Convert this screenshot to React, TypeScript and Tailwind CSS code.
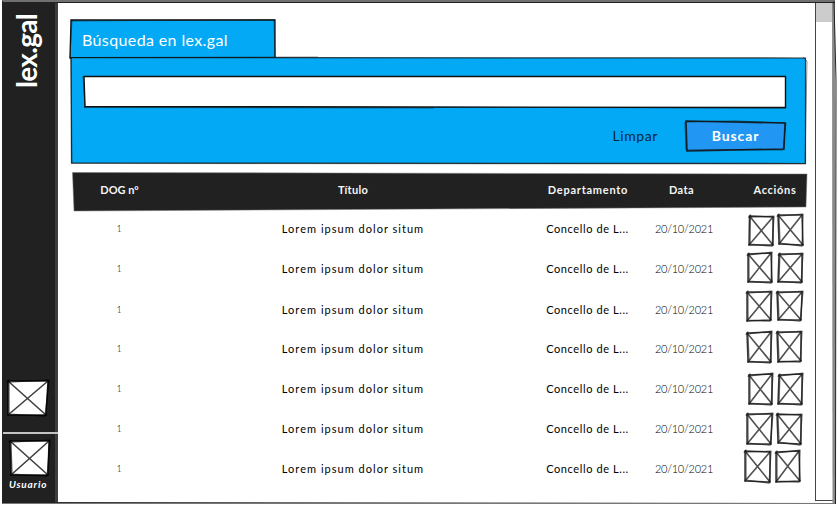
type Pt = [number, number];
type Quad = [Pt, Pt, Pt, Pt];

const toPath = (q: Quad) => `M${q.map((p) => p.join(' ')).join('L')}Z`;

/** Hand-drawn crossed placeholder box: two uneven outlines and both diagonals. */
function Sketch({ q, fill = 'none', ink = '#161616', className }: { q: Quad; fill?: string; ink?: string; className: string }) {
  const [a, b, c, d] = q;
  return (
    <svg className={`overflow-visible ${className}`} fill="none" stroke={ink} strokeLinejoin="round" strokeLinecap="round">
      <path d={toPath(q)} fill={fill} strokeWidth="1.5" strokeOpacity="0.85" />
      <path
        d={`M${a[0] - 0.9} ${a[1] + 1.2}L${b[0] + 1} ${b[1] - 0.8}L${c[0] - 0.9} ${c[1] + 1.1}L${d[0] + 1} ${d[1] - 0.8}L${a[0] + 0.9} ${a[1] - 1}`}
        strokeWidth="1.3"
        strokeOpacity="0.65"
      />
      <path d={`M${a.join(' ')}L${c.join(' ')}M${b.join(' ')}L${d.join(' ')}`} strokeWidth="1.6" strokeOpacity="0.75" />
    </svg>
  );
}

const rows: { left: Quad; right: Quad; pad: string }[] = [
  { left: [[4.5, 7], [28, 8], [28, 36], [4, 36]], right: [[3, 6], [27, 6], [28, 36], [4, 35]], pad: 'h-10' },
  { left: [[3, 5], [26, 4], [27, 33], [3, 33]], right: [[4, 5], [27, 5], [27, 33], [3, 33]], pad: 'h-10' },
  { left: [[2, 3], [26, 3], [26, 31], [2, 32]], right: [[2, 3], [27, 3], [26, 31], [3, 31]], pad: 'h-10 [&>span:not(:last-child)]:pt-px' },
  { left: [[2, 4], [26, 3], [26, 33], [3, 33]], right: [[2, 3], [26, 3], [26, 32], [3, 33]], pad: 'h-10' },
  { left: [[4, 6], [27, 5], [27, 35], [4, 35]], right: [[4, 6], [27, 5], [27, 35], [3, 35]], pad: 'h-10' },
  { left: [[2, 5], [27, 5], [26, 35], [2, 35]], right: [[2, 5], [26, 6], [26, 35], [3, 34]], pad: 'h-10' },
  { left: [[0, 2], [25, 3], [25, 33], [0, 32]], right: [[1, 3], [24, 2], [25, 32], [1, 33]], pad: 'h-10' },
];

function Sidebar() {
  return (
    <aside className="flex h-[504px] w-14 shrink-0 flex-col border-r-[3px] border-[#3d3d3d] bg-[#212121] text-white">
      <div className="flex h-[364px] w-full pt-[13px]">
        <span className="ml-[7px] h-[75px] rotate-180 whitespace-nowrap text-[28px] font-bold leading-[34px] tracking-[-0.7px] [writing-mode:vertical-rl]">lex.gal</span>
      </div>
      <Sketch q={[[6, 17], [46, 17], [44, 51], [6, 51]]} fill="#fff" ink="#000" className="h-[68px] w-full shrink-0" />
      <div className="h-[2px] w-14 shrink-0 bg-[#c4c4c4]" />
      <Sketch q={[[8, 7], [47, 7], [46, 41], [9, 41]]} fill="#fff" ink="#000" className="h-[43px] w-full shrink-0" />
      <span className="whitespace-nowrap pl-[7px] text-[10px] font-bold italic leading-[14px] tracking-[0.8px]">Usuario</span>
    </aside>
  );
}

function Search() {
  return (
    <section className="relative h-[153px] pt-[19px] pl-[13px]">
      <svg className="absolute inset-0 h-full w-full overflow-visible" fill="none" stroke="#111">
        <path d="M13 20L217 20L217 58L12 58Z" fill="#03a9f4" strokeWidth="1.3" />
        <path d="M12 21L217 19.5M14 19L12 58M216 20L217 57" strokeOpacity=".5" />
        <path d="M13 57.5L747.5 58L747.5 163.5L13.5 163Z" fill="#03a9f4" strokeWidth="1.2" strokeOpacity=".8" />
        <path d="M12 57.5L260 57M745 57L749 61L747 163M13 57L14 163M13 163.5L748 164" strokeOpacity=".45" />
      </svg>
      <h1 className="relative flex h-[38px] items-center pl-[11px] pt-[3px] text-[16px] leading-none tracking-[0.38px] text-white">Búsqueda en lex.gal</h1>
      <div className="relative h-[107px] pl-[13px] pt-[19px]">
        <svg className="block h-8 w-[702px] overflow-visible" fill="none" stroke="#111">
          <path d="M0 .5L701.5 .5L701.5 31.5L1 30.5Z" fill="#fff" strokeWidth="1.4" />
          <path d="M-1 0L1 32M1 30.5L702 32M0 31.5L350 32" strokeOpacity=".5" />
        </svg>
        <div className="mt-[13px] flex h-[30px] w-[702px] items-center justify-end">
          <span className="mr-[27px] text-[14px] font-normal leading-[28px] tracking-[0.6px] text-[#06283a]">Limpar</span>
          <button className="relative h-[30px] w-[101px]">
            <svg className="absolute inset-0 h-full w-full overflow-visible" fill="none" stroke="#111">
              <path d="M1 0L100 2L99 28L2 30Z" fill="#2196f3" strokeWidth="1.6" strokeOpacity=".85" />
              <path d="M0 1L50 0L101 2L98 29L50 28.5L1 29L0 1" strokeOpacity=".6" />
            </svg>
            <span className="relative text-[14px] font-bold leading-[28px] tracking-[0.9px] text-white">Buscar</span>
          </button>
        </div>
      </div>
    </section>
  );
}

function Results() {
  return (
    <section className="mt-[19px] pl-[15px]">
      <div className="relative flex h-[37px] w-[734px] items-center text-[11px] font-bold text-[#f5f5f5]">
        <svg className="absolute inset-0 h-full w-full overflow-visible" fill="#212121">
          <path d="M-.5 .5L734 2L733 35L1 39Z" stroke="#777" strokeWidth=".5" />
        </svg>
        <span className="relative w-[93px] shrink-0 text-center">DOG nº</span>
        <span className="relative w-[374px] shrink-0 text-center tracking-[0.3px]">Título</span>
        <span className="relative w-[96px] shrink-0 text-center tracking-[0.75px]">Departamento</span>
        <span className="relative w-[91px] shrink-0 text-center tracking-[0.4px]">Data</span>
        <span className="relative w-[80px] shrink-0 pl-[16px] text-center tracking-[0.7px]">Accións</span>
      </div>
      {rows.map((r, i) => (
        <div key={i} className={`flex w-[734px] text-[11px] leading-[40px] text-black ${r.pad}`}>
          <span className="w-[92px] shrink-0 text-center text-[9px] font-light">1</span>
          <span className="w-[376px] shrink-0 text-center tracking-[1.02px]">Lorem ipsum dolor situm</span>
          <span className="w-[93px] shrink-0 text-center tracking-[0.6px]">Concello de L...</span>
          <span className="w-[94px] shrink-0 pl-[6px] text-center font-light tracking-[-0.25px]">20/10/2021</span>
          <span className="flex pl-[17px]">
            <Sketch q={r.left} className="h-9 w-[30px]" />
            <Sketch q={r.right} className="h-9 w-[30px]" />
          </span>
        </div>
      ))}
    </section>
  );
}

export default function App() {
  return (
    <div className="relative flex h-[505px] w-[838px] overflow-hidden bg-white pl-[2px] font-['Lato','Open_Sans',sans-serif]">
      <Sidebar />
      <main className="w-[757px] shrink-0">
        <Search />
        <Results />
      </main>
      <div className="h-[501px] w-[18px] shrink-0 border-b border-l border-[#444] pt-[3px]">
        <div className="h-[19px] w-[16px] bg-[#ccc]" />
      </div>
      <svg className="pointer-events-none absolute inset-0 h-full w-full" fill="none">
        <path d="M2 1H835" stroke="#707070" strokeWidth="2" />
        <path d="M833.5 2L834 503" stroke="#8a8a8a" strokeWidth="3" />
        <path d="M2 2.5H835M2.5 1V504M834 1L836 80L835.5 504M2 502.5L835 503.5" stroke="#222" />
        <path d="M2 503.5H835" stroke="#777" />
      </svg>
    </div>
  );
}
